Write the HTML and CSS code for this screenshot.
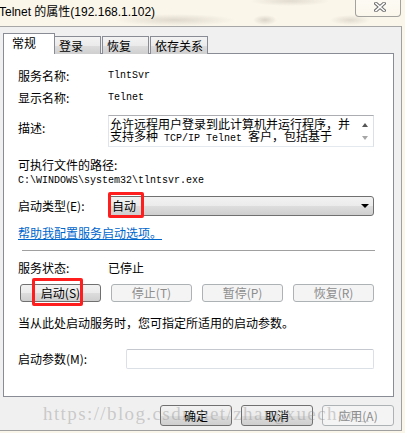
FILE: index.html
```html
<!DOCTYPE html>
<html lang="zh-CN">
<head>
    <meta charset="UTF-8">
    <meta name="viewport" content="width=device-width, initial-scale=1.0">
    <title>Telnet 的属性</title>
    <link rel="stylesheet" href="styles.css">
</head>
<body>
    <div class="titlebar">
        <div class="title">Telnet 的属性(192.168.1.102)</div>
        <div class="close-btn">
            <svg width="12" height="10" viewBox="0 0 12 10">
                <path d="M2 1.5 L10 8.5 M10 1.5 L2 8.5" stroke="#6f6f6f" stroke-width="3.6" stroke-linecap="square"/>
                <path d="M2 1.5 L10 8.5 M10 1.5 L2 8.5" stroke="#fff" stroke-width="1.6" stroke-linecap="square"/>
            </svg>
        </div>
    </div>

    <div class="window">
        <div class="tabs">
            <div class="tab active">常规</div>
            <div class="tab tab-login">登录</div>
            <div class="tab">恢复</div>
            <div class="tab tab-wide">依存关系</div>
        </div>

        <div class="panel">
            <div class="row row-first">
                <span class="label">服务名称:</span>
                <span class="en">TlntSvr</span>
            </div>
            <div class="row row-next">
                <span class="label">显示名称:</span>
                <span class="en">Telnet</span>
            </div>
            <div class="row-desc">
                <span class="label desc-label">描述:</span>
                <div class="textarea">
                    <div class="textarea-text">允许远程用户登录到此计算机并运行程序，并支持多种<span class="en"> TCP/IP Telnet </span>客户，包括基于</div>
                    <div class="scroll">
                        <div class="arrow-up"></div>
                        <div class="arrow-down"></div>
                    </div>
                </div>
            </div>
            <div class="path-label">可执行文件的路径:</div>
            <div class="path en">C:\WINDOWS\system32\tlntsvr.exe</div>
            <div class="row row-select">
                <span class="label">启动类型(E):</span>
                <div class="select">
                    <span>自动</span>
                    <div class="select-arrow"></div>
                    <div class="mark mark-select"></div>
                </div>
            </div>
            <a class="help-link" href="#">帮助我配置服务启动选项。</a>
            <div class="separator"></div>
            <div class="row row-status">
                <span class="label">服务状态:</span>
                <span>已停止</span>
            </div>
            <div class="service-btns">
                <div class="btn">启动(S)<div class="mark mark-start"></div></div>
                <div class="btn disabled">停止(T)</div>
                <div class="btn disabled">暂停(P)</div>
                <div class="btn disabled">恢复(R)</div>
            </div>
            <div class="hint">当从此处启动服务时，您可指定所适用的启动参数。</div>
            <div class="row row-param">
                <span class="label param-label">启动参数(M):</span>
                <div class="input"></div>
            </div>
        </div>

        <div class="dialog-btns">
            <div class="btn dlg-btn">确定</div>
            <div class="btn dlg-btn">取消</div>
            <div class="btn dlg-btn disabled">应用(A)</div>
        </div>

        <div class="watermark">https://blog.csdn.net/zhangxuechao_</div>
    </div>
</body>
</html>
```

FILE: styles.css
```css
* { margin: 0; padding: 0; box-sizing: border-box; }
body {
    font-family: "Noto Sans CJK SC", "Liberation Sans", sans-serif;
    font-size: 12px;
    color: #000;
    width: 405px;
    height: 433px;
    overflow: hidden;
    background:
        radial-gradient(ellipse 60px 6px at 175px 20px, rgba(120,110,100,0.22), transparent),
        radial-gradient(ellipse 12px 5px at 265px 20px, rgba(120,110,100,0.25), transparent),
        radial-gradient(ellipse 40px 5px at 290px 1px, rgba(120,110,100,0.2), transparent),
        radial-gradient(ellipse 20px 5px at 350px 20px, rgba(120,110,100,0.2), transparent),
        #fbf6ea;
}
.titlebar {
    height: 26px;
    display: flex;
    justify-content: space-between;
    align-items: flex-start;
}
.title {
    font-family: "Liberation Sans", "Noto Sans CJK SC", sans-serif;
    font-size: 12px;
    line-height: 16px;
    margin: 4px 0 0 -1px;
}
.close-btn {
    width: 46px;
    height: 17px;
    margin-right: 4px;
    border: 1px solid rgba(90,90,90,0.55);
    border-top: none;
    border-radius: 0 0 4px 4px;
    background: linear-gradient(rgba(255,255,255,0.5), rgba(255,255,255,0.15));
    display: flex;
    align-items: center;
    justify-content: center;
}
.close-btn svg { margin-left: 3px; margin-top: -2px; }

.window {
    position: relative;
    width: 402px;
    height: 405px;
    background: #f0f0f0;
    border-top: 1px solid #a7a7a7;
    border-right: 1px solid #a0a0a0;
    border-bottom: 1px solid #a0a0a0;
    padding: 6px 7px 0 3px;
}
.tabs {
    display: flex;
    align-items: flex-end;
    height: 21px;
    margin-bottom: -1px;
    gap: 1px;
}
.tab {
    position: relative;
    height: 18px;
    width: 47px;
    padding-left: 4px;
    line-height: 17px;
    border: 1px solid #898c95;
    border-bottom: none;
    background: linear-gradient(#f3f3f3 0%, #ebebeb 50%, #dddddd 51%, #cfcfcf 100%);
}
.tab.active {
    height: 21px;
    width: 52px;
    padding-left: 8px;
    line-height: 18px;
    background: #fff;
    z-index: 1;
    margin-right: -2px;
}
.tab-wide { width: 58px; }

.panel {
    width: 391px;
    background: #fff;
    border: 1px solid #898c95;
    padding: 14px 18px 27px 14px;
}
.row { display: flex; align-items: center; height: 16px; line-height: 16px; }
.row-next { margin-top: 6px; }
.label { width: 90px; flex-shrink: 0; }
.en { font-family: "Liberation Mono", monospace; font-size: 10px; }

.row-desc { display: flex; margin-top: 9px; height: 32px; }
.desc-label { padding-top: 5px; line-height: 16px; }
.textarea {
    display: flex;
    justify-content: space-between;
    width: 266px;
    height: 32px;
    border: 1px solid #abadb3;
    border-color: #abadb3 #dbdfe6 #e3e9ef #e2e3ea;
    padding: 2px 0 0 1px;
}
.textarea-text {
    width: 240px;
    line-height: 12px;
}
.scroll {
    width: 17px;
    display: flex;
    flex-direction: column;
    justify-content: space-between;
    align-items: center;
    padding: 5px 0 6px;
}
.arrow-up {
    width: 0; height: 0;
    border-left: 3.5px solid transparent;
    border-right: 3.5px solid transparent;
    border-bottom: 4px solid #555;
}
.arrow-down {
    width: 0; height: 0;
    border-left: 3.5px solid transparent;
    border-right: 3.5px solid transparent;
    border-top: 4px solid #a6a6a6;
}

.path-label { margin-top: 10px; line-height: 16px; }
.path { line-height: 16px; }

.row-select { margin-top: 7px; height: 20px; }
.select {
    position: relative;
    width: 266px;
    height: 20px;
    border: 1px solid #707070;
    border-radius: 3px;
    background: linear-gradient(#f2f2f2 0%, #ebebeb 50%, #dddddd 51%, #cfcfcf 100%);
    display: flex;
    align-items: center;
    justify-content: space-between;
    padding: 0 4px 0 3px;
}
.select-arrow {
    width: 0; height: 0;
    border-left: 4px solid transparent;
    border-right: 4px solid transparent;
    border-top: 4px solid #000;
}
.mark {
    position: absolute;
    border: 3px solid #ff1e1e;
    border-radius: 2px;
}
.mark-select { left: -1px; top: -5px; width: 36px; height: 26px; }

.help-link {
    display: block;
    margin-top: 9px;
    line-height: 16px;
    color: #0066cc;
    text-decoration: underline;
}
.separator { margin-top: 9px; height: 1px; background: #a0a0a0; width: 353px; margin-left: 4px; }
.row-status { margin-top: 9px; }

.service-btns {
    display: flex;
    gap: 10px;
    margin-top: 8px;
    padding-left: 2px;
}
.btn {
    position: relative;
    width: 81px;
    height: 18px;
    line-height: 16px;
    text-align: center;
    border: 1px solid #707070;
    border-radius: 3px;
    background: linear-gradient(#f2f2f2 0%, #ebebeb 50%, #dddddd 51%, #cfcfcf 100%);
}
.btn.disabled {
    border-color: #adb2b5;
    background: #f4f4f4;
    color: #8d8d8d;
}
.mark-start { left: 11px; top: -7px; width: 51px; height: 28px; }

.hint { margin-top: 13px; line-height: 16px; }
.row-param { margin-top: 18px; height: 20px; }
.param-label { width: 108px; }
.input {
    width: 248px;
    height: 20px;
    border: 1px solid #dbdfe6;
    border-top-color: #c5c8ce;
    border-radius: 2px;
}

.dialog-btns {
    display: flex;
    justify-content: flex-end;
    gap: 9px;
    margin-top: 8px;
}
.dlg-btn { width: 72px; height: 21px; line-height: 19px; }

.watermark {
    position: absolute;
    left: 43px;
    top: 376px;
    font-family: "Liberation Serif", serif;
    font-size: 19px;
    letter-spacing: 1.4px;
    color: rgba(140,140,140,0.4);
    pointer-events: none;
    white-space: nowrap;
}
```
